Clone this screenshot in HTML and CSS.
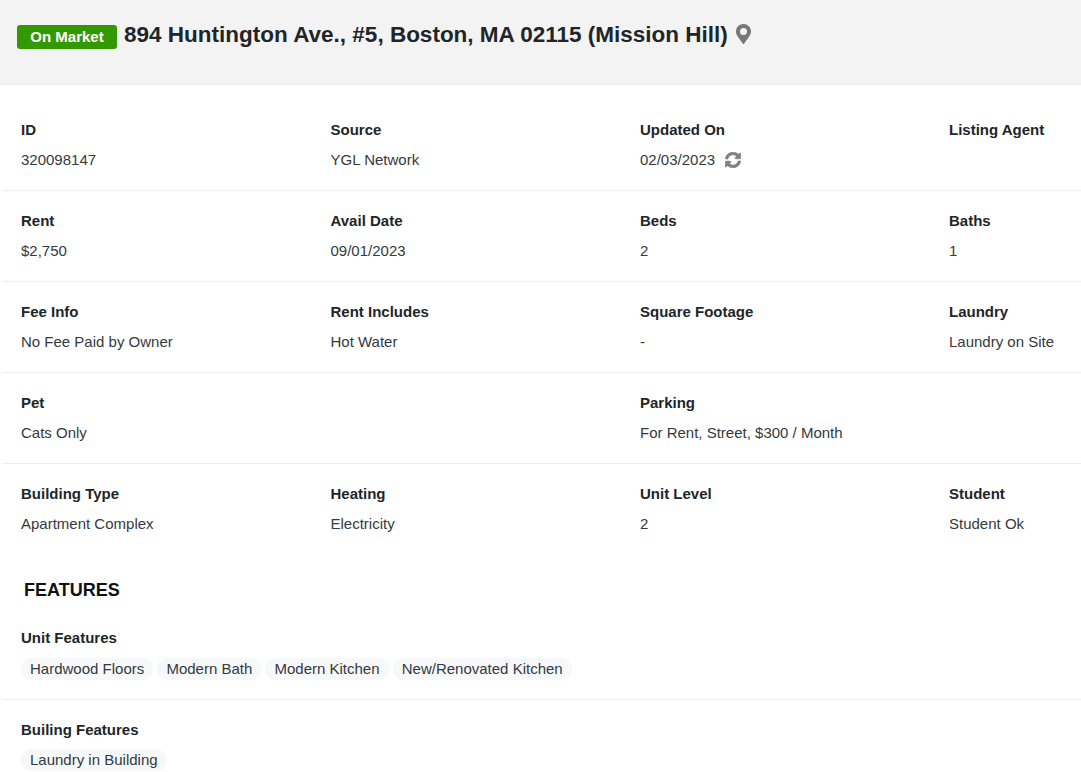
FILE: index.html
```html
<!DOCTYPE html>
<html>
  <head>
    <title>Listing Details</title>
    <link rel="stylesheet" href="styles.css">
  </head>

  <body>
    <!-- Listing title -->
    <div class="listing-header">
      <span class="status-badge">On Market</span>
      <h1>894 Huntington Ave., #5, Boston, MA 02115 (Mission Hill)</h1>
      <svg class="pin-icon" viewBox="0 0 384 512" aria-hidden="true">
        <path d="M172 502C27 291 0 265 0 192 0 86 86 0 192 0s192 86 192 192c0 73-27 99-172 310-10 14-30 14-40 0zm20-220a90 90 0 1 0 0-180 90 90 0 0 0 0 180z"/>
      </svg>
    </div>

    <!-- Details -->
    <div class="details">
      <div class="detail-row">
        <div class="detail-cell"><h4>ID</h4><p>320098147</p></div>
        <div class="detail-cell"><h4>Source</h4><p>YGL Network</p></div>
        <div class="detail-cell">
          <h4>Updated On</h4>
          <p>02/03/2023
            <svg class="sync-icon" viewBox="0 0 512 512" aria-hidden="true">
              <path d="M370.72 133.28C339.458 104.008 298.888 87.962 255.848 88c-77.458.068-144.328 53.178-162.791 126.85-1.344 5.363-6.122 9.15-11.651 9.15H24.103c-7.498 0-13.194-6.807-11.807-14.176C33.933 94.924 134.813 8 256 8c66.448 0 126.791 26.136 171.315 68.685L463.03 40.97C478.149 25.851 504 36.559 504 57.941V192c0 13.255-10.745 24-24 24H345.941c-21.382 0-32.09-25.851-16.971-40.971l41.75-41.749zM32 296h134.059c21.382 0 32.09 25.851 16.971 40.971l-41.75 41.75c31.262 29.273 71.835 45.319 114.876 45.28 77.418-.07 144.315-53.144 162.787-126.849 1.344-5.363 6.122-9.15 11.651-9.15h57.304c7.498 0 13.194 6.807 11.807 14.176C478.067 417.076 377.187 504 256 504c-66.448 0-126.791-26.136-171.315-68.685L48.97 471.03C33.851 486.149 8 475.441 8 454.059V320c0-13.255 10.745-24 24-24z"/>
            </svg>
          </p>
        </div>
        <div class="detail-cell"><h4>Listing Agent</h4><p></p></div>
      </div>

      <div class="detail-row">
        <div class="detail-cell"><h4>Rent</h4><p>$2,750</p></div>
        <div class="detail-cell"><h4>Avail Date</h4><p>09/01/2023</p></div>
        <div class="detail-cell"><h4>Beds</h4><p>2</p></div>
        <div class="detail-cell"><h4>Baths</h4><p>1</p></div>
      </div>

      <div class="detail-row">
        <div class="detail-cell"><h4>Fee Info</h4><p>No Fee Paid by Owner</p></div>
        <div class="detail-cell"><h4>Rent Includes</h4><p>Hot Water</p></div>
        <div class="detail-cell"><h4>Square Footage</h4><p>-</p></div>
        <div class="detail-cell"><h4>Laundry</h4><p>Laundry on Site</p></div>
      </div>

      <div class="detail-row">
        <div class="detail-cell wide"><h4>Pet</h4><p>Cats Only</p></div>
        <div class="detail-cell wide"><h4>Parking</h4><p>For Rent, Street, $300 / Month</p></div>
      </div>

      <div class="detail-row last">
        <div class="detail-cell"><h4>Building Type</h4><p>Apartment Complex</p></div>
        <div class="detail-cell"><h4>Heating</h4><p>Electricity</p></div>
        <div class="detail-cell"><h4>Unit Level</h4><p>2</p></div>
        <div class="detail-cell"><h4>Student</h4><p>Student Ok</p></div>
      </div>
    </div>

    <!-- Features -->
    <h3 class="features-title">FEATURES</h3>

    <div class="feature-group">
      <h4>Unit Features</h4>
      <div class="tags">
        <span class="tag">Hardwood Floors</span>
        <span class="tag">Modern Bath</span>
        <span class="tag">Modern Kitchen</span>
        <span class="tag">New/Renovated Kitchen</span>
      </div>
    </div>

    <div class="feature-group last">
      <h4>Builing Features</h4>
      <div class="tags">
        <span class="tag">Laundry in Building</span>
      </div>
    </div>
  </body>
</html>
```

FILE: styles.css
```css
* {
  margin: 0;
  padding: 0;
  box-sizing: border-box;
  font-family: "Liberation Sans", Arial, sans-serif;
}

html,
body {
  height: 772px;
  overflow: hidden;
}

body {
  background: #fff;
  color: #212529;
}

.listing-header {
  display: flex;
  align-items: flex-start;
  height: 85px;
  padding: 20px 17px 0;
  background: #f3f3f3;
  border-bottom: 1px solid #eeeeee;
}

.listing-header h1 {
  font-size: 22.5px;
  line-height: 28px;
  font-weight: 700;
  margin: 1px 0 0 7px;
}

.status-badge {
  width: 100px;
  height: 24px;
  margin-top: 5px;
  background: #339900;
  border-radius: 3px;
  color: #fff;
  font-size: 15px;
  font-weight: 700;
  line-height: 24px;
  text-align: center;
}

.pin-icon {
  width: 15px;
  height: 20px;
  margin: 4px 0 0 8px;
  fill: #75787b;
}

.detail-row {
  display: grid;
  grid-template-columns: 309.5px 309.5px 309px 1fr;
  height: 91px;
  margin-left: 2px;
  padding: 20px 0 0 19px;
  border-bottom: 1px solid #eeeeee;
}

.details .detail-row:first-child {
  height: 106px;
  padding-top: 35px;
}

.detail-row.last {
  border-bottom: none;
  height: 90px;
}

.detail-cell.wide {
  grid-column: span 2;
}

h4 {
  font-size: 15px;
  line-height: 20px;
  font-weight: 700;
}

.detail-cell p {
  display: flex;
  align-items: center;
  height: 20px;
  margin-top: 10px;
  font-size: 15px;
  line-height: 20px;
  color: #343a40;
}

.sync-icon {
  width: 16px;
  height: 16px;
  margin-left: 10px;
  fill: #808080;
  stroke: #808080;
  stroke-width: 24;
}

.features-title {
  margin: 24px 0 6px 24px;
  font-size: 18px;
  line-height: 24px;
  font-weight: 700;
  color: #111;
}

.feature-group {
  margin-left: 2px;
  padding: 20px 0 19px 19px;
  border-bottom: 1px solid #eeeeee;
}

.feature-group.last {
  border-bottom: none;
}

.tags {
  display: flex;
  gap: 4.2px;
  margin-top: 10px;
}

.feature-group.last .tags {
  margin-top: 9px;
}

.tag {
  height: 22px;
  padding: 0 9px;
  background: #f6f8fa;
  border-radius: 11px;
  font-size: 15px;
  line-height: 22px;
  color: #343a40;
}
```
